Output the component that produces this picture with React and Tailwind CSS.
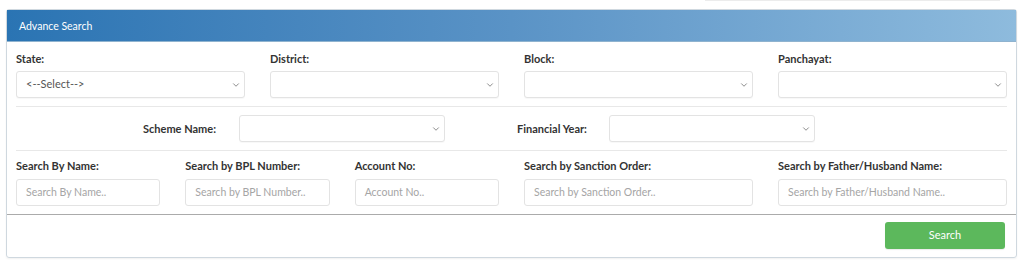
import React from 'react';
import { ChevronDown } from 'lucide-react';

const Label = ({ children }) => (
    <div className="text-[11px] font-bold text-[#333] leading-[14px]">{children}</div>
);

const SelectBox = ({ value, className = '' }) => (
    <div className={`h-[27px] flex items-center justify-between pl-[9px] pr-[3px] border border-[#e3e3e3] rounded-[3px] bg-white shadow-[0_1px_1px_rgba(0,0,0,0.03)] ${className}`}>
        <span className="text-[11px] text-[#555]">{value}</span>
        <ChevronDown className="w-[10px] h-[10px] text-[#666]" strokeWidth={1.8} />
    </div>
);

const TextBox = ({ placeholder }) => (
    <div className="h-[27px] flex items-center pl-[9px] border border-[#e3e3e3] rounded-[3px] bg-white">
        <span className="text-[10.5px] text-[#a5a5a5] whitespace-nowrap">{placeholder}</span>
    </div>
);

const App = () => {
    return (
        <div className="w-[1024px] h-[266px] bg-white overflow-hidden" style={{ fontFamily: 'Lato, "Open Sans", sans-serif' }}>
            {/* leftover edge of the element above */}
            <div className="ml-[705px] w-[295px] h-px bg-[#ececec]"></div>

            <div className="ml-[6px] mr-[7px] mt-[8px] border border-[#cfd8df] rounded-[3px] shadow-[0_1px_2px_rgba(0,0,0,0.06)]">
                {/* Header */}
                <div className="h-[32px] flex items-center pt-[2px] px-[12px] text-white text-[10.5px] bg-gradient-to-r from-[#2a74b3] via-[#5a93c6] to-[#8ebbdd] border-b border-[#8fb3cf]">
                    Advance Search
                </div>

                {/* Body */}
                <div className="px-[9px] pt-[10px] pb-[8px]">
                    <div className="grid grid-cols-12 gap-x-[25px]">
                        <div className="col-span-3">
                            <Label>State:</Label>
                            <SelectBox value="<--Select-->" className="mt-[5px]" />
                        </div>
                        <div className="col-span-3">
                            <Label>District:</Label>
                            <SelectBox className="mt-[5px]" />
                        </div>
                        <div className="col-span-3">
                            <Label>Block:</Label>
                            <SelectBox className="mt-[5px]" />
                        </div>
                        <div className="col-span-3">
                            <Label>Panchayat:</Label>
                            <SelectBox className="mt-[5px]" />
                        </div>
                    </div>

                    <div className="mt-[8px] border-t border-[#e8e8e8]"></div>

                    <div className="mt-[8px] flex items-center">
                        <div className="w-[200px] text-right"><Label>Scheme Name:</Label></div>
                        <SelectBox className="ml-[23px] w-[206px]" />
                        <div className="ml-[72px] w-[92px]"><Label>Financial Year:</Label></div>
                        <SelectBox className="w-[206px]" />
                    </div>

                    <div className="mt-[8px] border-t border-[#e8e8e8]"></div>

                    <div className="mt-[8px] grid grid-cols-12 gap-x-[25px]">
                        <div className="col-span-2">
                            <Label>Search By Name:</Label>
                            <div className="mt-[6px]"><TextBox placeholder="Search By Name.." /></div>
                        </div>
                        <div className="col-span-2">
                            <Label>Search by BPL Number:</Label>
                            <div className="mt-[6px]"><TextBox placeholder="Search by BPL Number.." /></div>
                        </div>
                        <div className="col-span-2">
                            <Label>Account No:</Label>
                            <div className="mt-[6px]"><TextBox placeholder="Account No.." /></div>
                        </div>
                        <div className="col-span-3">
                            <Label>Search by Sanction Order:</Label>
                            <div className="mt-[6px]"><TextBox placeholder="Search by Sanction Order.." /></div>
                        </div>
                        <div className="col-span-3">
                            <Label>Search by Father/Husband Name:</Label>
                            <div className="mt-[6px]"><TextBox placeholder="Search by Father/Husband Name.." /></div>
                        </div>
                    </div>
                </div>

                {/* Footer */}
                <div className="border-t border-[#ababab] flex justify-end pt-[7px] pb-[8px] pr-[11px]">
                    <button className="w-[120px] h-[27px] rounded-[3px] bg-[#5cb85c] text-white text-[11px] shadow-[0_1px_1px_rgba(0,0,0,0.08)]">
                        Search
                    </button>
                </div>
            </div>
        </div>
    );
};

export default App;
